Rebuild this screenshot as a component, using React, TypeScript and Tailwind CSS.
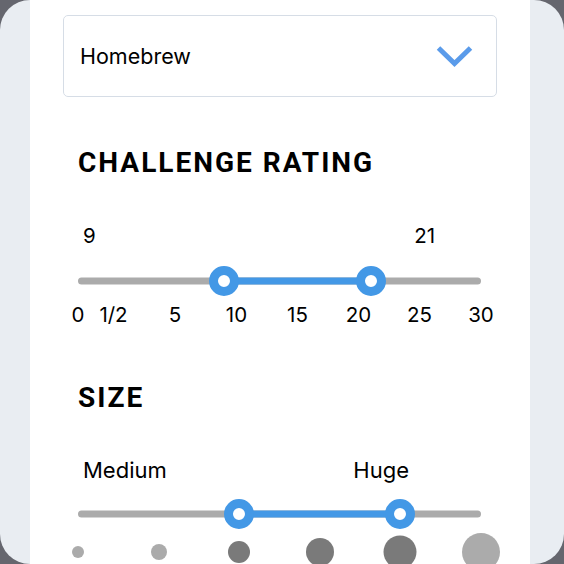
import React from "react";

function Thumb({ left }: { left: number }) {
  return (
    <div
      className="absolute top-1/2 w-[30px] h-[30px] -translate-x-1/2 -translate-y-1/2 rounded-full border-[9px] border-[#4398e6] bg-white"
      style={{ left }}
    />
  );
}

function RangeTrack({ a, b }: { a: number; b: number }) {
  return (
    <div className="relative h-[30px] w-[403px]">
      <div className="absolute left-0 right-0 top-1/2 h-[7px] -translate-y-1/2 rounded-full bg-[#ababab]" />
      <div
        className="absolute top-1/2 h-[7px] -translate-y-1/2 bg-[#4398e6]"
        style={{ left: a, width: b - a }}
      />
      <Thumb left={a} />
      <Thumb left={b} />
    </div>
  );
}

const ticks: [string, number][] = [
  ["0", 0],
  ["1/2", 35.5],
  ["5", 97],
  ["10", 158.5],
  ["15", 219.5],
  ["20", 280.5],
  ["25", 341.5],
  ["30", 403],
];

const sizes: [number, string][] = [
  [12, "bg-[#ababab]"],
  [16, "bg-[#ababab]"],
  [22, "bg-[#7a7a7a]"],
  [28, "bg-[#7a7a7a]"],
  [33, "bg-[#7a7a7a]"],
  [38, "bg-[#ababab]"],
];

export default function App() {
  return (
    <div className="w-[564px] h-[564px] overflow-hidden bg-[#65666e]">
      <div className="w-full h-full overflow-hidden rounded-[30px] bg-[#e9edf2]">
        <div
          className="ml-[30px] h-full w-[500px] bg-white pl-[33px] pt-[15px] text-black"
          style={{ fontFamily: "Inter, 'Liberation Sans', sans-serif" }}
        >
          <div className="flex h-[82px] w-[434px] items-center justify-between rounded-[5px] border border-[#d6dde6] pl-[16px] pr-[23px]">
            <span className="text-[21.5px] leading-[20px]">Homebrew</span>
            <svg width="37" height="22" viewBox="0 0 37 22">
              <polyline
                points="2.5,3 18.5,18.5 34.5,3"
                fill="none"
                stroke="#5a9bea"
                strokeWidth="5"
              />
            </svg>
          </div>

          <div className="pl-[15px]">
            <h2
              className="mt-[52px] text-[28px] font-bold leading-[28px] tracking-[2px]"
              style={{ fontFamily: "Roboto, 'Liberation Sans', sans-serif" }}
            >
              CHALLENGE RATING
            </h2>
            <div className="mt-[49px] flex w-[403px] justify-between pl-[5px] pr-[46px] text-[20.5px] leading-[20px]">
              <span>9</span>
              <span>21</span>
            </div>
            <div className="mt-[20px]">
              <RangeTrack a={146} b={293} />
            </div>
            <div className="relative mt-[9px] h-[20px] w-[403px] text-[20.5px] leading-[20px]">
              {ticks.map(([t, x]) => (
                <span
                  key={t}
                  className="absolute top-0 -translate-x-1/2 whitespace-nowrap"
                  style={{ left: x }}
                >
                  {t}
                </span>
              ))}
            </div>

            <h2
              className="mt-[59px] text-[28px] font-bold leading-[28px] tracking-[2px]"
              style={{ fontFamily: "Roboto, 'Liberation Sans', sans-serif" }}
            >
              SIZE
            </h2>
            <div className="mt-[48px] flex w-[403px] justify-between pl-[5px] pr-[72px] text-[22px] leading-[20px]">
              <span>Medium</span>
              <span>Huge</span>
            </div>
            <div className="mt-[19px]">
              <RangeTrack a={161} b={322} />
            </div>
            <div className="relative mt-[4px] h-[38px] w-[403px]">
              {sizes.map(([d, c], i) => (
                <div
                  key={i}
                  className={`absolute top-1/2 -translate-x-1/2 -translate-y-1/2 rounded-full ${c}`}
                  style={{ left: i * 80.6, width: d, height: d }}
                />
              ))}
            </div>
          </div>
        </div>
      </div>
    </div>
  );
}
